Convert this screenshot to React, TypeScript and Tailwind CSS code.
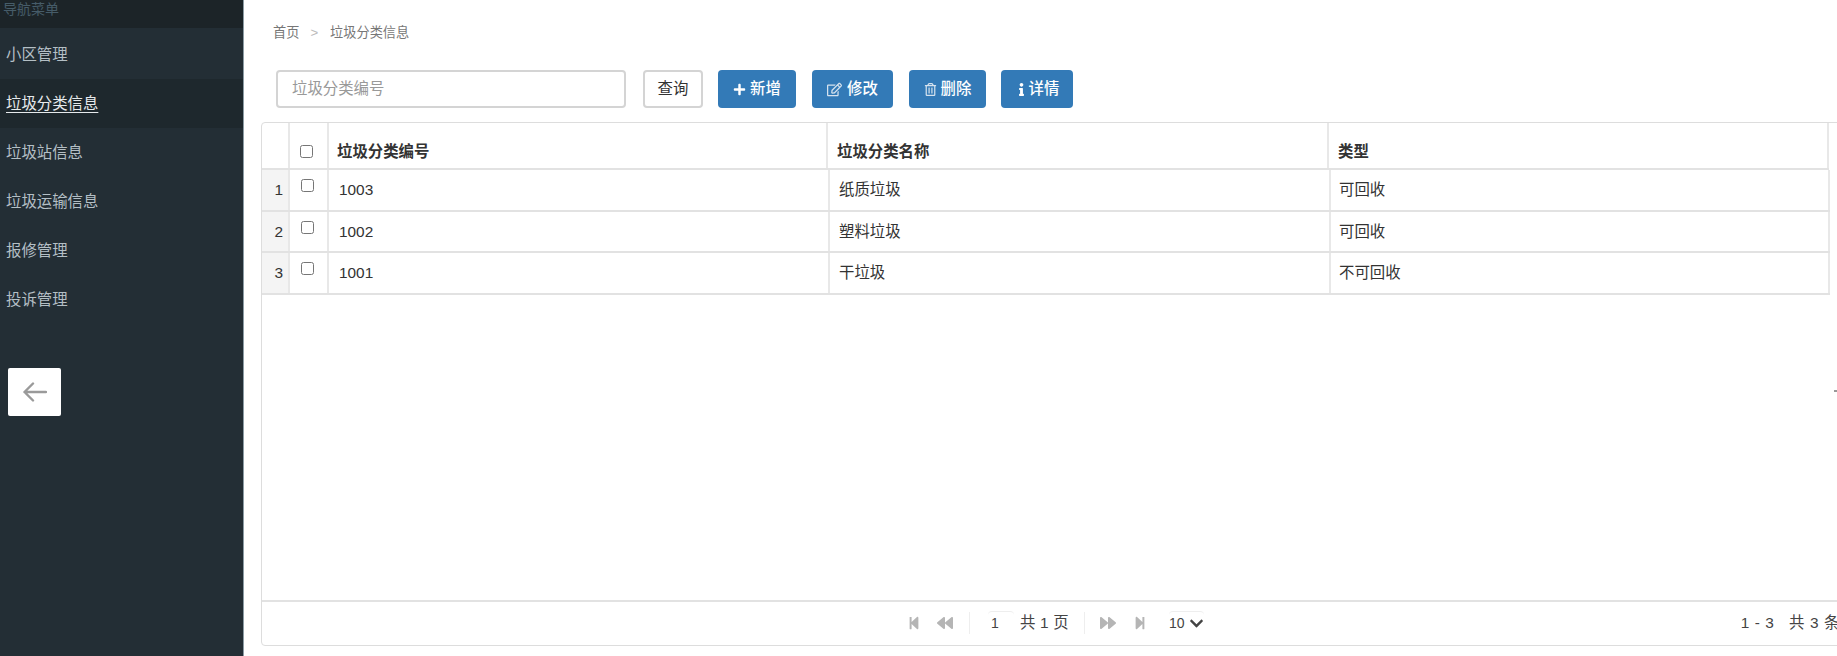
import {
  FaPlus,
  FaRegEdit,
  FaRegTrashAlt,
  FaInfo,
  FaStepBackward,
  FaBackward,
  FaForward,
  FaStepForward,
  FaChevronDown,
} from "react-icons/fa";

const menu = ["小区管理", "垃圾分类信息", "垃圾站信息", "垃圾运输信息", "报修管理", "投诉管理"];
const rows = [
  ["1", "1003", "纸质垃圾", "可回收"],
  ["2", "1002", "塑料垃圾", "可回收"],
  ["3", "1001", "干垃圾", "不可回收"],
];
const buttons = [
  { label: "新增", icon: <FaPlus className="text-[13px]" />, cls: "w-[78px] ml-[15px] gap-[4px]" },
  { label: "修改", icon: <FaRegEdit className="text-[15px] text-[#d5e2ee]" />, cls: "w-[81px] ml-[16px] gap-[5px]" },
  { label: "删除", icon: <FaRegTrashAlt className="text-[13px] text-[#d5e2ee]" />, cls: "w-[77px] ml-[16px] gap-[4px]" },
  { label: "详情", icon: <FaInfo className="text-[13px]" />, cls: "w-[72px] ml-[15px] gap-[1px]" },
];

export default function App() {
  return (
    <div className="flex h-[656px] w-[1837px] overflow-hidden bg-white text-[15.4px] text-[#333] font-['Liberation_Sans','Noto_Sans_CJK_SC',sans-serif]">
      <aside className="h-full w-[244px] shrink-0 border-r border-[#8c9ca4] bg-[#232e35]">
        <div className="h-[28px] overflow-hidden bg-[#1c2428] pl-[3px] text-[14px] leading-[18px] text-[#465c69]">导航菜单</div>
        <nav className="pt-[2px]">
          {menu.map((m, i) => (
            <div
              key={m}
              className={
                i === 1
                  ? "flex h-[49px] items-center bg-[#1e282d] pl-[6px] text-[#e6eaec] underline underline-offset-[3px]"
                  : "flex h-[49px] items-center pl-[6px] text-[#b4bfc5]"
              }
            >
              {m}
            </div>
          ))}
        </nav>
        <button className="ml-[8px] mt-[44px] flex h-[48px] w-[53px] items-center justify-center rounded-[2px] bg-white">
          <svg width="24" height="20" viewBox="0 0 24 20" fill="none" stroke="#9a9a9a" strokeWidth="2.4" strokeLinecap="round" strokeLinejoin="round">
            <path d="M23 10H1.5M10 1.5L1.5 10L10 18.5" />
          </svg>
        </button>
      </aside>

      <main className="relative flex min-w-0 flex-1 flex-col pb-[10px] pl-[17px] pt-[23px]">
        <div className="flex h-[20px] items-center pl-[12px] text-[13.2px] text-[#777]">
          <span>首页</span>
          <span className="ml-[11px] mr-[12px] text-[#bbb]">&gt;</span>
          <span>垃圾分类信息</span>
        </div>

        <div className="ml-[15px] mt-[27px] flex h-[38px] items-center">
          <input
            className="h-[38px] w-[350px] rounded-[4px] border-2 border-[#d4d4d4] px-[14px] text-[15.4px] outline-none placeholder:text-[#999]"
            placeholder="垃圾分类编号"
          />
          <button className="ml-[17px] h-[38px] w-[60px] rounded-[4px] border-2 border-[#d4d4d4] bg-white text-[#333]">查询</button>
          {buttons.map((b) => (
            <button
              key={b.label}
              className={`${b.cls} flex h-[38px] items-center justify-center rounded-[4px] bg-[#337ab7] font-medium text-white`}
            >
              {b.icon}
              {b.label}
            </button>
          ))}
        </div>

        <section className="mt-[14px] flex min-h-0 w-[1590px] flex-1 flex-col rounded-[4px] border border-[#ddd]">
          <div className="flex h-[47px] w-[1567px] shrink-0 border-b-2 border-[#e2e2e2] font-bold">
            <div className="w-[28px] border-r-2 border-[#e8e8e8]" />
            <div className="flex w-[39px] justify-center border-r-2 border-[#e8e8e8] pt-[22px]">
              <input type="checkbox" className="mr-[5px] h-[13px] w-[13px]" />
            </div>
            <div className="w-[499px] border-r-2 border-[#e8e8e8] pl-[8px] pt-[17px]">垃圾分类编号</div>
            <div className="w-[501px] border-r-2 border-[#e8e8e8] pl-[9px] pt-[17px]">垃圾分类名称</div>
            <div className="w-[500px] border-r-2 border-[#e8e8e8] pl-[9px] pt-[17px]">类型</div>
          </div>

          {rows.map((r) => (
            <div key={r[0]} className="flex h-[41.5px] w-[1568px] shrink-0 items-stretch border-b-2 border-[#e2e2e2]">
              <div className="flex w-[28px] items-center justify-end border-r-2 border-[#e8e8e8] bg-[#f4f4f4] pr-[5px]">{r[0]}</div>
              <div className="flex w-[39px] justify-center border-r-2 border-[#e8e8e8] pt-[9px]">
                <input type="checkbox" className="mr-[2px] h-[13px] w-[13px]" />
              </div>
              <div className="flex w-[501px] items-center border-r-2 border-[#e8e8e8] pl-[10px]">{r[1]}</div>
              <div className="flex w-[501px] items-center border-r-2 border-[#e8e8e8] pl-[9px]">{r[2]}</div>
              <div className="flex w-[499px] items-center border-r-2 border-[#e8e8e8] pl-[8px]">{r[3]}</div>
            </div>
          ))}

          <div className="min-h-0 flex-1" />

          <div className="flex h-[45px] shrink-0 items-center border-t-2 border-[#e2e2e2] pb-[2px] pl-[645px] text-[#444]">
            <FaStepBackward className="text-[14px] text-[#b5b5b5]" />
            <FaBackward className="ml-[16px] text-[16px] text-[#b5b5b5]" />
            <span className="ml-[16px] h-[22px] border-l border-[#eee]" />
            <span className="ml-[18px] flex h-[24px] w-[26px] items-center justify-center rounded-t-[4px] border-t border-[#eee] pr-[12px] text-[14px]">1</span>
            <span className="ml-[6px] tracking-[0.2px]">共 1 页</span>
            <span className="ml-[15px] h-[22px] border-l border-[#eee]" />
            <FaForward className="ml-[15px] text-[16px] text-[#b5b5b5]" />
            <FaStepForward className="ml-[17px] text-[14px] text-[#b5b5b5]" />
            <span className="ml-[22px] flex h-[24px] items-center gap-[5px] rounded-t-[4px] border-t border-[#eee] text-[14px]">
              10
              <FaChevronDown className="text-[15px] text-[#444]" />
            </span>
            <span className="ml-auto whitespace-pre pr-[10px] tracking-[0.6px]">1 - 3   共 3 条</span>
          </div>
        </section>

        <span className="absolute right-0 top-[390px] h-[2px] w-[3px] bg-[#999]" />
      </main>
    </div>
  );
}
